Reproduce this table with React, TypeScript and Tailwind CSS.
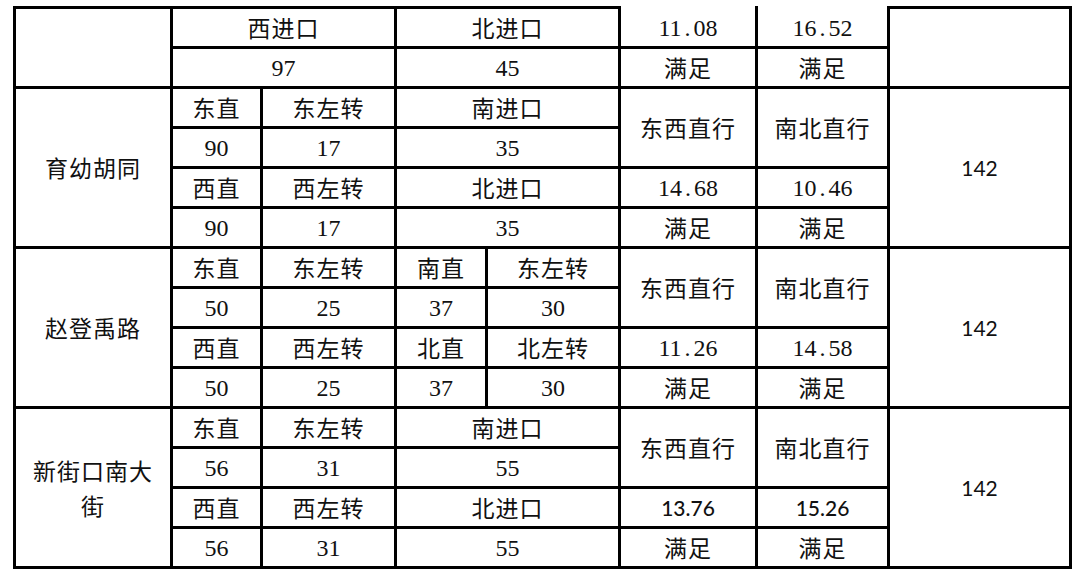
import React from 'react';

type Kind = 'cjk' | 'num' | 'sans';

// SimSun style decimals: the period takes a half-width cell
function Decimal({ value }: { value: string }) {
  const [a, b] = value.split('.');
  if (b === undefined) return <>{value}</>;
  return (
    <>
      {a}
      <span className="mx-[3px]">.</span>
      {b}
    </>
  );
}

function Cell({ c, kind = 'cjk', children }: { c: string; kind?: Kind; children?: React.ReactNode }) {
  const font =
    kind === 'sans'
      ? '[font-family:Lato,Noto_Sans_CJK_SC,sans-serif] text-[21px]'
      : kind === 'num'
        ? '[font-family:Liberation_Serif,DejaVu_Serif,serif] text-[24px]'
        : '[font-family:Noto_Sans_CJK_SC,sans-serif] text-[23px] tracking-[1px]';
  return (
    <div className={`flex items-center justify-center bg-white text-center leading-none text-[#111] ${font} ${c}`}>
      {kind === 'num' && typeof children === 'string' ? <Decimal value={children} /> : children}
    </div>
  );
}

export default function App() {
  const top = 'border-t-[3px] border-black';
  return (
    <div className="min-h-[581px] bg-white pt-[6px] pl-[13px]">
      <div className="grid w-fit grid-cols-[154px_87px_131px_88px_130px_134px_129px_179px] grid-rows-[40px_repeat(13,37px)] gap-[3px] bg-black px-[3px] pb-[3px]">
        {/* top partial block */}
        <Cell c={`col-start-1 row-start-1 row-span-2 ${top}`} />
        <Cell c={`col-start-2 col-span-2 row-start-1 ${top}`}>西进口</Cell>
        <Cell c={`col-start-4 col-span-2 row-start-1 ${top}`}>北进口</Cell>
        <Cell c="col-start-6 row-start-1 pt-[3px]" kind="num">11.08</Cell>
        <Cell c="col-start-7 row-start-1 pt-[3px]" kind="num">16.52</Cell>
        <Cell c={`col-start-8 row-start-1 row-span-2 ${top}`} />
        <Cell c="col-start-2 col-span-2 row-start-2" kind="num">97</Cell>
        <Cell c="col-start-4 col-span-2 row-start-2" kind="num">45</Cell>
        <Cell c="col-start-6 row-start-2">满足</Cell>
        <Cell c="col-start-7 row-start-2">满足</Cell>

        {/* 育幼胡同 */}
        <Cell c="col-start-1 row-start-3 row-span-4">育幼胡同</Cell>
        <Cell c="col-start-2 row-start-3">东直</Cell>
        <Cell c="col-start-3 row-start-3">东左转</Cell>
        <Cell c="col-start-4 col-span-2 row-start-3">南进口</Cell>
        <Cell c="col-start-6 row-start-3 row-span-2">东西直行</Cell>
        <Cell c="col-start-7 row-start-3 row-span-2">南北直行</Cell>
        <Cell c="col-start-8 row-start-3 row-span-4" kind="sans">142</Cell>
        <Cell c="col-start-2 row-start-4" kind="num">90</Cell>
        <Cell c="col-start-3 row-start-4" kind="num">17</Cell>
        <Cell c="col-start-4 col-span-2 row-start-4" kind="num">35</Cell>
        <Cell c="col-start-2 row-start-5">西直</Cell>
        <Cell c="col-start-3 row-start-5">西左转</Cell>
        <Cell c="col-start-4 col-span-2 row-start-5">北进口</Cell>
        <Cell c="col-start-6 row-start-5" kind="num">14.68</Cell>
        <Cell c="col-start-7 row-start-5" kind="num">10.46</Cell>
        <Cell c="col-start-2 row-start-6" kind="num">90</Cell>
        <Cell c="col-start-3 row-start-6" kind="num">17</Cell>
        <Cell c="col-start-4 col-span-2 row-start-6" kind="num">35</Cell>
        <Cell c="col-start-6 row-start-6">满足</Cell>
        <Cell c="col-start-7 row-start-6">满足</Cell>

        {/* 赵登禹路 */}
        <Cell c="col-start-1 row-start-7 row-span-4">赵登禹路</Cell>
        <Cell c="col-start-2 row-start-7">东直</Cell>
        <Cell c="col-start-3 row-start-7">东左转</Cell>
        <Cell c="col-start-4 row-start-7">南直</Cell>
        <Cell c="col-start-5 row-start-7">东左转</Cell>
        <Cell c="col-start-6 row-start-7 row-span-2">东西直行</Cell>
        <Cell c="col-start-7 row-start-7 row-span-2">南北直行</Cell>
        <Cell c="col-start-8 row-start-7 row-span-4" kind="sans">142</Cell>
        <Cell c="col-start-2 row-start-8" kind="num">50</Cell>
        <Cell c="col-start-3 row-start-8" kind="num">25</Cell>
        <Cell c="col-start-4 row-start-8" kind="num">37</Cell>
        <Cell c="col-start-5 row-start-8" kind="num">30</Cell>
        <Cell c="col-start-2 row-start-9">西直</Cell>
        <Cell c="col-start-3 row-start-9">西左转</Cell>
        <Cell c="col-start-4 row-start-9">北直</Cell>
        <Cell c="col-start-5 row-start-9">北左转</Cell>
        <Cell c="col-start-6 row-start-9" kind="num">11.26</Cell>
        <Cell c="col-start-7 row-start-9" kind="num">14.58</Cell>
        <Cell c="col-start-2 row-start-10" kind="num">50</Cell>
        <Cell c="col-start-3 row-start-10" kind="num">25</Cell>
        <Cell c="col-start-4 row-start-10" kind="num">37</Cell>
        <Cell c="col-start-5 row-start-10" kind="num">30</Cell>
        <Cell c="col-start-6 row-start-10">满足</Cell>
        <Cell c="col-start-7 row-start-10">满足</Cell>

        {/* 新街口南大街 */}
        <Cell c="col-start-1 row-start-11 row-span-4">
          <span className="block leading-[35px]">
            新街口南大
            <br />
            街
          </span>
        </Cell>
        <Cell c="col-start-2 row-start-11">东直</Cell>
        <Cell c="col-start-3 row-start-11">东左转</Cell>
        <Cell c="col-start-4 col-span-2 row-start-11">南进口</Cell>
        <Cell c="col-start-6 row-start-11 row-span-2">东西直行</Cell>
        <Cell c="col-start-7 row-start-11 row-span-2">南北直行</Cell>
        <Cell c="col-start-8 row-start-11 row-span-4" kind="sans">142</Cell>
        <Cell c="col-start-2 row-start-12" kind="num">56</Cell>
        <Cell c="col-start-3 row-start-12" kind="num">31</Cell>
        <Cell c="col-start-4 col-span-2 row-start-12" kind="num">55</Cell>
        <Cell c="col-start-2 row-start-13">西直</Cell>
        <Cell c="col-start-3 row-start-13">西左转</Cell>
        <Cell c="col-start-4 col-span-2 row-start-13">北进口</Cell>
        <Cell c="col-start-6 row-start-13 font-medium" kind="sans">13.76</Cell>
        <Cell c="col-start-7 row-start-13 font-medium" kind="sans">15.26</Cell>
        <Cell c="col-start-2 row-start-14" kind="num">56</Cell>
        <Cell c="col-start-3 row-start-14" kind="num">31</Cell>
        <Cell c="col-start-4 col-span-2 row-start-14" kind="num">55</Cell>
        <Cell c="col-start-6 row-start-14">满足</Cell>
        <Cell c="col-start-7 row-start-14">满足</Cell>
      </div>
    </div>
  );
}
